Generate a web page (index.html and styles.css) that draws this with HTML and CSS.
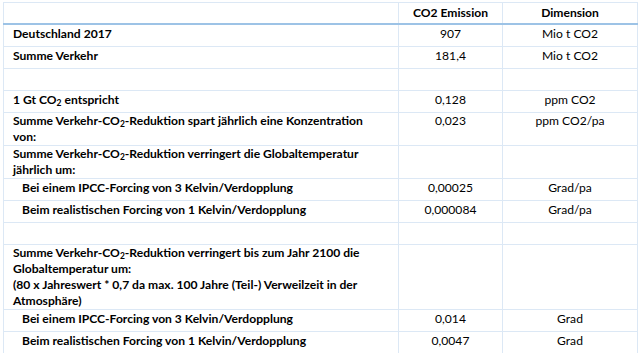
FILE: index.html
```html
<!DOCTYPE html>
<html lang="de">
<head>
<meta charset="utf-8">
<link rel="stylesheet" href="styles.css">
</head>
<body>
<table class="sheet">
  <colgroup>
    <col class="c-label">
    <col class="c-value">
    <col class="c-unit">
  </colgroup>
  <thead>
    <tr>
      <th class="label"></th>
      <th class="num">CO2 Emission</th>
      <th class="num">Dimension</th>
    </tr>
  </thead>
  <tbody>
    <tr><td class="label">Deutschland 2017</td><td class="num">907</td><td class="num">Mio t CO2</td></tr>
    <tr><td class="label">Summe Verkehr</td><td class="num">181,4</td><td class="num">Mio t CO2</td></tr>
    <tr><td class="label"></td><td class="num"></td><td class="num"></td></tr>
    <tr><td class="label">1 Gt CO<sub>2</sub> entspricht</td><td class="num">0,128</td><td class="num">ppm CO2</td></tr>
    <tr class="multi"><td class="label">Summe Verkehr-CO<sub>2</sub>-Reduktion spart jährlich eine Konzentration<br>von:</td><td class="num">0,023</td><td class="num">ppm CO2/pa</td></tr>
    <tr class="multi"><td class="label">Summe Verkehr-CO<sub>2</sub>-Reduktion verringert die Globaltemperatur<br>jährlich um:</td><td class="num"></td><td class="num"></td></tr>
    <tr><td class="label indent">Bei einem IPCC-Forcing von 3 Kelvin/Verdopplung</td><td class="num">0,00025</td><td class="num">Grad/pa</td></tr>
    <tr><td class="label indent">Beim realistischen Forcing von 1 Kelvin/Verdopplung</td><td class="num">0,000084</td><td class="num">Grad/pa</td></tr>
    <tr><td class="label"></td><td class="num"></td><td class="num"></td></tr>
    <tr class="multi"><td class="label">Summe Verkehr-CO<sub>2</sub>-Reduktion verringert bis zum Jahr 2100 die<br>Globaltemperatur um:<br>(80 x Jahreswert * 0,7 da max. 100 Jahre (Teil-) Verweilzeit in der<br>Atmosphäre)</td><td class="num"></td><td class="num"></td></tr>
    <tr><td class="label indent">Bei einem IPCC-Forcing von 3 Kelvin/Verdopplung</td><td class="num">0,014</td><td class="num">Grad</td></tr>
    <tr><td class="label indent">Beim realistischen Forcing von 1 Kelvin/Verdopplung</td><td class="num">0,0047</td><td class="num">Grad</td></tr>
  </tbody>
</table>
</body>
</html>
```
FILE: styles.css
```css
html, body {
  margin: 0;
  padding: 0;
  background: #ffffff;
}

body {
  padding: 2px 0 0 3px;
  font-family: Lato, "Open Sans", "Liberation Sans", sans-serif;
  font-size: 12.1px;
  color: #000000;
}

.sheet {
  border-collapse: collapse;
  table-layout: fixed;
  width: 634px;
  border: 1px solid #d4e3f3;
}

.c-label { width: 395px; }
.c-value { width: 104px; }
.c-unit { width: 135px; }

.sheet th,
.sheet td {
  border: 1px solid #dce8f5;
  height: 20px;
  padding: 1px 9px 0 9px;
  line-height: 16px;
  vertical-align: top;
  white-space: nowrap;
  overflow: hidden;
}

.sheet .multi td {
  padding-top: 0;
}

.sheet th {
  font-weight: 700;
  border-bottom: 2px solid #9dc3e6;
  height: 18px;
  padding-top: 2px;
}

.sheet td.label {
  font-weight: 700;
  text-align: left;
}

.sheet td.indent {
  padding-left: 18px;
}

.num {
  text-align: center;
  font-weight: 400;
}

sub {
  font-size: 0.7em;
  line-height: 0;
  vertical-align: -0.25em;
}
```
